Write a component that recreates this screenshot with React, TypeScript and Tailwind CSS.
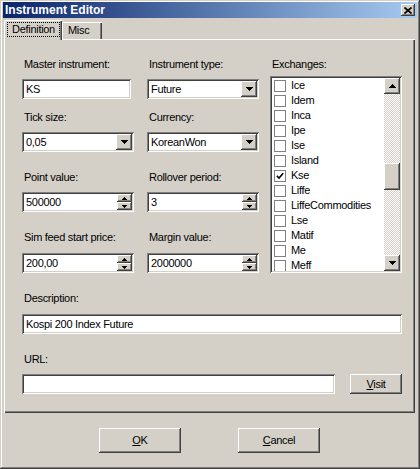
import React from "react";

const sunken =
  "shadow-[inset_1px_1px_0_#808080,inset_-1px_-1px_0_#ffffff,inset_2px_2px_0_#404040,inset_-2px_-2px_0_#d4d0c8]";
const raised =
  "shadow-[inset_-1px_-1px_0_#404040,inset_1px_1px_0_#ffffff,inset_-2px_-2px_0_#808080,inset_2px_2px_0_#d4d0c8]";

function Down({ w = 7, h = 4 }: { w?: number; h?: number }) {
  return (
    <svg width={w} height={h} viewBox={`0 0 ${w} ${h}`} shapeRendering="crispEdges">
      <polygon points={`0,0 ${w},0 ${w / 2},${h}`} fill="#000" />
    </svg>
  );
}
function Up({ w = 7, h = 4 }: { w?: number; h?: number }) {
  return (
    <svg width={w} height={h} viewBox={`0 0 ${w} ${h}`} shapeRendering="crispEdges">
      <polygon points={`0,${h} ${w},${h} ${w / 2},0`} fill="#000" />
    </svg>
  );
}

function Label({ children, className = "" }: { children: React.ReactNode; className?: string }) {
  return <div className={`h-[13px] leading-[13px] pl-[2px] whitespace-nowrap ${className}`}>{children}</div>;
}

function Combo({ value, className = "" }: { value: string; className?: string }) {
  return (
    <div className={`w-[112px] h-[20px] bg-white ${sunken} flex items-center p-[2px] ${className}`}>
      <span className="flex-1 pl-[2px] leading-[16px] whitespace-nowrap">{value}</span>
      <div className={`w-[16px] h-[16px] bg-[#d4d0c8] ${raised} flex items-center justify-center`}>
        <Down />
      </div>
    </div>
  );
}

function Spin({ value, className = "" }: { value: string; className?: string }) {
  return (
    <div className={`w-[112px] h-[20px] bg-white ${sunken} flex items-center p-[2px] ${className}`}>
      <span className="flex-1 pl-[2px] leading-[16px] whitespace-nowrap">{value}</span>
      <div className="w-[15px] h-[16px] flex flex-col">
        <div className={`h-[8px] bg-[#d4d0c8] ${raised} flex items-center justify-center`}>
          <Up w={5} h={3} />
        </div>
        <div className={`h-[8px] bg-[#d4d0c8] ${raised} flex items-center justify-center`}>
          <Down w={5} h={3} />
        </div>
      </div>
    </div>
  );
}

function TextField({ value, className = "" }: { value: string; className?: string }) {
  return (
    <div className={`h-[20px] bg-white ${sunken} flex items-center p-[2px] ${className}`}>
      <span className="pl-[2px] leading-[16px] whitespace-nowrap">{value}</span>
    </div>
  );
}

const exchanges: { name: string; checked?: boolean }[] = [
  { name: "Ice" },
  { name: "Idem" },
  { name: "Inca" },
  { name: "Ipe" },
  { name: "Ise" },
  { name: "Island" },
  { name: "Kse", checked: true },
  { name: "Liffe" },
  { name: "LiffeCommodities" },
  { name: "Lse" },
  { name: "Matif" },
  { name: "Me" },
  { name: "Meff" },
];

export default function App() {
  return (
    <div className="w-[420px] h-[469px] bg-[#d4d0c8] text-black text-[11px] tracking-[-0.3px] font-['Liberation_Sans',Arial,sans-serif] flex flex-col overflow-hidden shadow-[inset_-1px_-1px_0_#404040,inset_1px_1px_0_#d4d0c8,inset_-2px_-2px_0_#808080,inset_2px_2px_0_#ffffff]">
      {/* Title bar */}
      <div className="mt-[2px] mx-[3px] h-[16px] bg-[linear-gradient(90deg,#0a246a,#a6caf0)] flex items-center pl-[2px] pr-[2px]">
        <span className="flex-1 text-white font-bold text-[12px] tracking-normal leading-[16px] whitespace-nowrap">Instrument Editor</span>
        <div className={`w-[14px] h-[12px] bg-[#d4d0c8] ${raised} flex items-center justify-center`}>
          <svg width="8" height="7" viewBox="0 0 8 7">
            <path d="M0.5 0.5 L7.5 6.5 M7.5 0.5 L0.5 6.5" stroke="#000" strokeWidth="1.7" />
          </svg>
        </div>
      </div>

      {/* Tabs */}
      <div className="mt-[2px] ml-[4px] h-[19px] flex items-end">
        <div className="relative z-10 -mb-px w-[58px] h-[20px] bg-[#d4d0c8] rounded-tl-[2px] shadow-[inset_1px_1px_0_#ffffff,inset_-1px_0_0_#404040,inset_-2px_0_0_#808080] pl-[3px] pt-[2px]">
          <div className="w-[53px] h-[15px] border border-dotted border-black flex items-center justify-center leading-[13px]">
            Definition
          </div>
        </div>
        <div className="w-[40px] h-[17px] bg-[#d4d0c8] shadow-[inset_1px_1px_0_#ffffff,inset_-1px_0_0_#404040,inset_-2px_0_0_#808080] pl-[6px] flex items-center leading-[13px]">
          Misc
        </div>
      </div>

      {/* Panel */}
      <div className="ml-[4px] w-[411px] h-[374px] shadow-[inset_1px_1px_0_#ffffff,inset_-1px_-1px_0_#404040,inset_-2px_-2px_0_#808080] pl-[18px] pt-[19px] flex flex-col">
        <div className="flex">
          {/* column 1 */}
          <div className="w-[112px] flex flex-col">
            <Label>Master instrument:</Label>
            <TextField value="KS" className="mt-[8px] w-[109px]" />
            <Label className="mt-[12px]">Tick size:</Label>
            <Combo value="0,05" className="mt-[8px]" />
            <Label className="mt-[19px]">Point value:</Label>
            <Spin value="500000" className="mt-[8px]" />
            <Label className="mt-[19px]">Sim feed start price:</Label>
            <Spin value="200,00" className="mt-[9px]" />
          </div>
          {/* column 2 */}
          <div className="ml-[13px] w-[112px] flex flex-col">
            <Label>Instrument type:</Label>
            <Combo value="Future" className="mt-[8px]" />
            <Label className="mt-[12px]">Currency:</Label>
            <Combo value="KoreanWon" className="mt-[8px]" />
            <Label className="mt-[19px]">Rollover period:</Label>
            <Spin value="3" className="mt-[8px]" />
            <Label className="mt-[19px]">Margin value:</Label>
            <Spin value="2000000" className="mt-[9px]" />
          </div>
          {/* column 3 */}
          <div className="ml-[11px] flex flex-col">
            <Label>Exchanges:</Label>
            <div className={`mt-[5px] w-[132px] h-[197px] bg-white ${sunken} p-[2px] flex`}>
              <div className="flex-1 overflow-hidden">
                {exchanges.map((e) => (
                  <div key={e.name} className="h-[15px] flex items-center pl-[2px] gap-[5px]">
                    <div className="w-[12px] h-[12px] border border-[#808080] bg-white flex items-center justify-center">
                      {e.checked && (
                        <svg width="8" height="8" viewBox="0 0 8 8">
                          <path d="M0.8 3.8 L3 6 L7.2 1.2" stroke="#000" strokeWidth="1.6" fill="none" />
                        </svg>
                      )}
                    </div>
                    <span className="leading-[13px] whitespace-nowrap">{e.name}</span>
                  </div>
                ))}
              </div>
              <div className="w-[16px] flex flex-col bg-[image:repeating-conic-gradient(#d4d0c8_0_25%,#ffffff_0_50%)] bg-[length:2px_2px]">
                <div className={`h-[16px] shrink-0 bg-[#d4d0c8] ${raised} flex items-center justify-center`}>
                  <Up />
                </div>
                <div className="h-[69px] shrink-0" />
                <div className={`h-[27px] shrink-0 bg-[#d4d0c8] ${raised}`} />
                <div className="flex-1" />
                <div className={`h-[16px] shrink-0 bg-[#d4d0c8] ${raised} flex items-center justify-center`}>
                  <Down />
                </div>
              </div>
            </div>
          </div>
        </div>

        <Label className="mt-[19px]">Description:</Label>
        <TextField value="Kospi 200 Index Future" className="mt-[9px] w-[380px]" />

        <Label className="mt-[19px]">URL:</Label>
        <div className="mt-[8px] flex items-center">
          <TextField value="" className="w-[313px]" />
          <div className={`ml-[15px] w-[52px] h-[20px] bg-[#d4d0c8] ${raised} flex items-center justify-center leading-[13px]`}>
            <span>
              <span className="underline">V</span>isit
            </span>
          </div>
        </div>
      </div>

      {/* Bottom buttons */}
      <div className="mt-[15px] flex justify-center gap-[57px] pr-[1px]">
        <div className={`w-[82px] h-[25px] bg-[#d4d0c8] ${raised} flex items-center justify-center`}>
          <span>
            <span className="underline">O</span>K
          </span>
        </div>
        <div className={`w-[82px] h-[25px] bg-[#d4d0c8] ${raised} flex items-center justify-center`}>
          <span>
            <span className="underline">C</span>ancel
          </span>
        </div>
      </div>
    </div>
  );
}
